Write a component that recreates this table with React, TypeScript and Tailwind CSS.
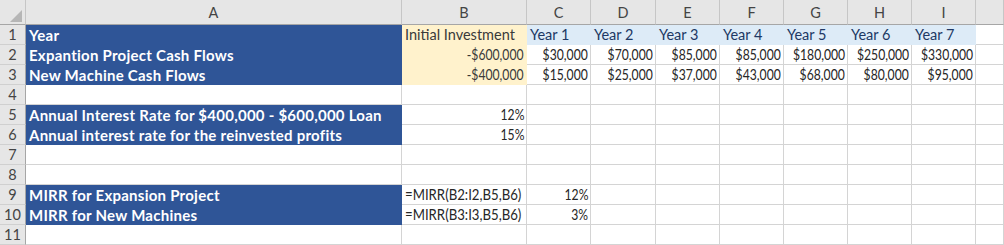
type Kind = 'blue' | 'yellow' | 'lightblue' | 'plain';

type Cell = {
  text?: string;
  right?: boolean;
  kind?: Kind;
};

const letters = ['A', 'B', 'C', 'D', 'E', 'F', 'G', 'H', 'I', ''];

const years = ['Year 1', 'Year 2', 'Year 3', 'Year 4', 'Year 5', 'Year 6', 'Year 7'];
const expansion = ['$30,000', '$70,000', '$85,000', '$85,000', '$180,000', '$250,000', '$330,000'];
const machines = ['$15,000', '$25,000', '$37,000', '$43,000', '$68,000', '$80,000', '$95,000'];

const blank: Cell = {};

const rows: Cell[][] = [
  [
    { text: 'Year', kind: 'blue' },
    { text: 'Initial Investment', kind: 'yellow' },
    ...years.map((y) => ({ text: y, kind: 'lightblue' as Kind })),
    blank,
  ],
  [
    { text: 'Expantion Project Cash Flows', kind: 'blue' },
    { text: '-$600,000', kind: 'yellow', right: true },
    ...expansion.map((v) => ({ text: v, right: true })),
    blank,
  ],
  [
    { text: 'New Machine Cash Flows', kind: 'blue' },
    { text: '-$400,000', kind: 'yellow', right: true },
    ...machines.map((v) => ({ text: v, right: true })),
    blank,
  ],
  [],
  [{ text: 'Annual Interest Rate for $400,000 - $600,000 Loan', kind: 'blue' }, { text: '12%', right: true }],
  [{ text: 'Annual interest rate for the reinvested profits', kind: 'blue' }, { text: '15%', right: true }],
  [],
  [],
  [
    { text: 'MIRR for Expansion Project', kind: 'blue' },
    { text: '=MIRR(B2:I2,B5,B6)' },
    { text: '12%', right: true },
  ],
  [
    { text: 'MIRR for New Machines', kind: 'blue' },
    { text: '=MIRR(B3:I3,B5,B6)' },
    { text: '3%', right: true },
  ],
  [],
];

const kindClass: Record<Kind, string> = {
  blue: 'bg-[#2f5597] border-[#2f5597] text-white font-bold text-[15px] tracking-[0.25px]',
  yellow: 'bg-[#fff2cc] border-[#fff2cc] text-[#3a3a3a]',
  lightblue: 'bg-[#ddebf7] border-[#ddebf7] text-[#203864]',
  plain: 'bg-white border-[#d4d4d4] text-[#262626]',
};

// Lato digits run wider than Excel's Calibri, so figures are squeezed a little
function CellText({ text, right }: { text: string; right?: boolean }) {
  if (text.startsWith('=')) {
    return <span className="inline-block origin-left scale-x-[0.91]">{text}</span>;
  }
  if (/^[-$\d]/.test(text)) {
    return (
      <span className={`inline-block scale-x-[0.84] ${right ? 'origin-right' : 'origin-left'}`}>{text}</span>
    );
  }
  return <span>{text}</span>;
}

function SheetCell({ cell }: { cell: Cell }) {
  const kind = cell.kind ?? 'plain';
  return (
    <div
      className={`h-5 border-r border-b overflow-hidden whitespace-nowrap flex items-center pl-[3px] pr-[2px] leading-5 ${
        cell.right ? 'justify-end' : 'justify-start'
      } ${kindClass[kind]}`}
    >
      {cell.text && <CellText text={cell.text} right={cell.right} />}
    </div>
  );
}

export default function App() {
  return (
    <div
      className="w-[1004px] h-[245px] overflow-hidden bg-white text-[14.5px]"
      style={{ fontFamily: 'Lato, "Open Sans", sans-serif' }}
    >
      <div className="grid grid-cols-[26px_376px_125px_64px_65px_64px_64px_64px_64px_64px_1fr]">
        {/* Corner */}
        <div className="relative h-[25px] bg-[#e6e6e6] border-r border-b border-r-[#c6c6c6] border-b-[#a6a6a6]">
          <svg className="absolute left-[10px] top-[10px]" width="12" height="12" viewBox="0 0 12 12">
            <polygon points="12,0 12,12 0,12" fill="#b6b6b6" />
          </svg>
        </div>
        {/* Column headers */}
        {letters.map((l, i) => (
          <div
            key={i}
            className="h-[25px] bg-[#e6e6e6] border-r border-b border-r-[#c6c6c6] border-b-[#a6a6a6] flex items-center justify-center text-[#444] pt-[2px]"
          >
            {l}
          </div>
        ))}

        {rows.map((row, r) => (
          <div key={r} className="contents">
            <div className="h-5 bg-[#e6e6e6] border-r border-b border-r-[#a6a6a6] border-b-[#d0d0d0] flex items-center justify-center text-[#444]">
              {r + 1}
            </div>
            {letters.map((_, c) => (
              <SheetCell key={c} cell={row[c] ?? blank} />
            ))}
          </div>
        ))}
      </div>
    </div>
  );
}
